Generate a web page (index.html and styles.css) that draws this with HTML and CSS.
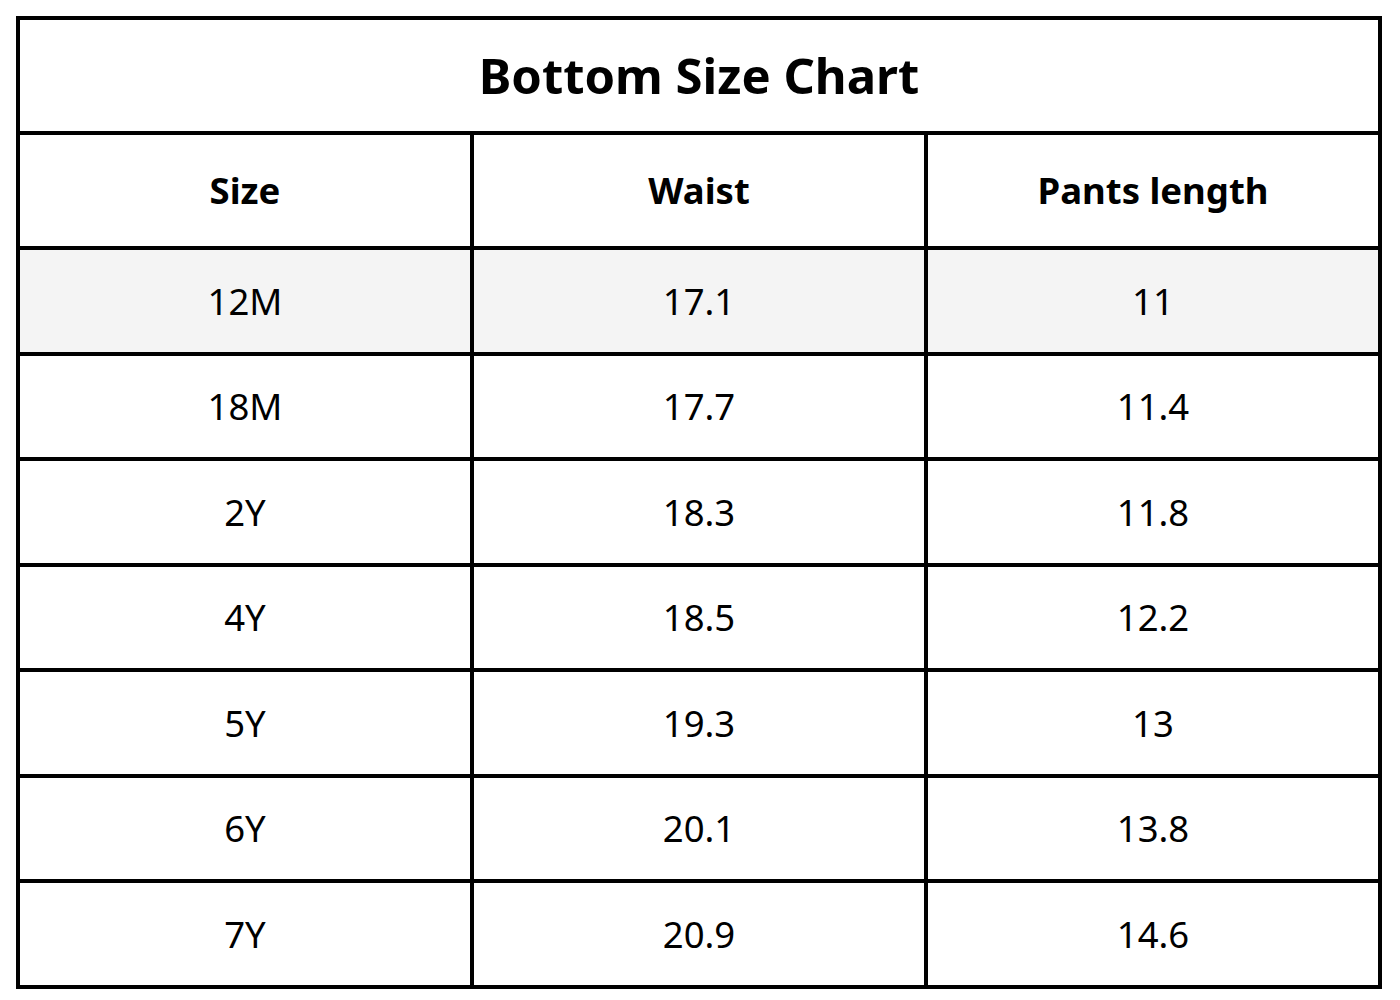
FILE: index.html
```html
<!DOCTYPE html>
<html lang="en">
<head>
<meta charset="utf-8">
<title>Bottom Size Chart</title>
<link rel="stylesheet" href="styles.css">
</head>
<body>
<div class="chart">
  <div class="cell title">Bottom Size Chart</div>
  <div class="cell head">Size</div>
  <div class="cell head">Waist</div>
  <div class="cell head">Pants length</div>

  <div class="cell shade">12M</div>
  <div class="cell shade">17.1</div>
  <div class="cell shade">11</div>

  <div class="cell">18M</div>
  <div class="cell">17.7</div>
  <div class="cell">11.4</div>

  <div class="cell">2Y</div>
  <div class="cell">18.3</div>
  <div class="cell">11.8</div>

  <div class="cell">4Y</div>
  <div class="cell">18.5</div>
  <div class="cell">12.2</div>

  <div class="cell">5Y</div>
  <div class="cell">19.3</div>
  <div class="cell">13</div>

  <div class="cell">6Y</div>
  <div class="cell">20.1</div>
  <div class="cell">13.8</div>

  <div class="cell">7Y</div>
  <div class="cell">20.9</div>
  <div class="cell">14.6</div>
</div>
</body>
</html>
```
FILE: styles.css
```css
html, body {
  margin: 0;
  padding: 0;
  background: #ffffff;
}
body {
  padding: 16px 0 0 16px;
  font-family: "Noto Sans", "Open Sans", sans-serif;
  color: #000;
}
.chart {
  width: 1366px;
  height: 973px;
  box-sizing: border-box;
  padding: 4px;
  background: #000;
  display: grid;
  grid-template-columns: 1fr 1fr 1fr;
  grid-template-rows: 111px 111px repeat(7, 1fr);
  gap: 4px;
}
.cell {
  background: #fff;
  display: flex;
  align-items: center;
  justify-content: center;
  font-size: 36.5px;
  font-weight: 400;
  line-height: 1;
}
.title {
  grid-column: 1 / 4;
  font-size: 49px;
  font-weight: 700;
}
.head {
  font-weight: 700;
}
.shade {
  background: #f4f4f4;
}
```
